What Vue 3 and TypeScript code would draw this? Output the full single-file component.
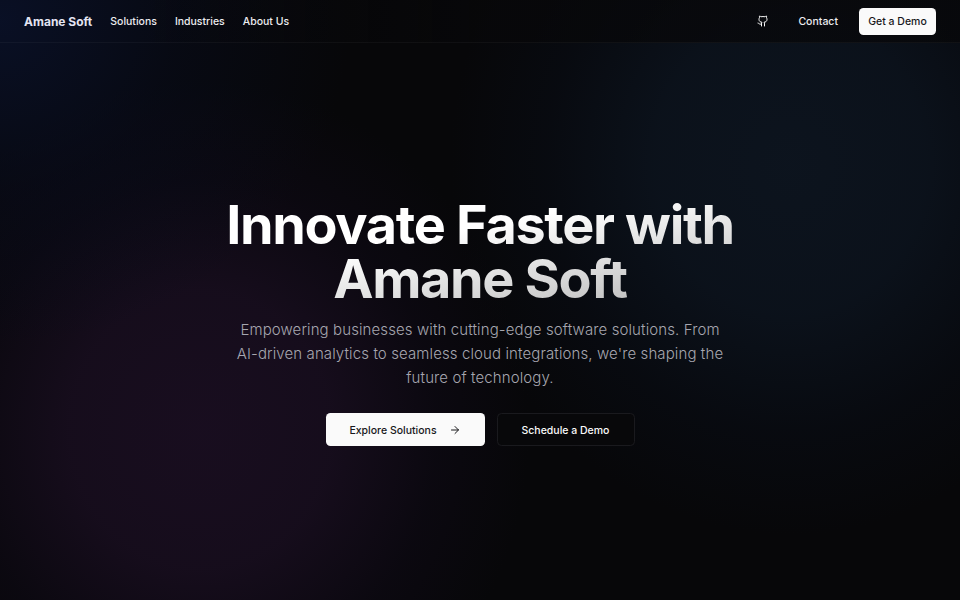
<script setup lang="ts">
interface NavLink {
  label: string
  href: string
}

const links: NavLink[] = [
  { label: 'Solutions', href: '#solutions' },
  { label: 'Industries', href: '#industries' },
  { label: 'About Us', href: '#about' },
]
</script>

<template>
  <div class="page">
    <header class="header">
      <nav class="nav">
        <a class="brand" href="#">Amane Soft</a>
        <a v-for="link in links" :key="link.href" class="link" :href="link.href">{{ link.label }}</a>
      </nav>
      <div class="actions">
        <a class="github" href="#github">
          <svg viewBox="0 0 24 24" class="icon">
            <path d="M15 22v-4a4.8 4.8 0 0 0-1-3.5c3 0 6-2 6-5.5.08-1.25-.27-2.48-1-3.5.28-1.15.28-2.35 0-3.5 0 0-1 0-3 1.5-2.64-.5-5.36-.5-8 0C6 2 5 2 5 2c-.3 1.15-.3 2.35 0 3.5A5.403 5.403 0 0 0 4 9c0 3.500 3 5.500 6 5.500-.39.49-.68 1.050-.85 1.650-.17.6-.22 1.230-.15 1.850v4" />
            <path d="M9 18c-4.510 2-5-2-7-2" />
          </svg>
        </a>
        <a class="contact" href="#contact">Contact</a>
        <button class="button small" type="button">Get a Demo</button>
      </div>
    </header>
    <main class="hero">
      <h1 class="title">Innovate Faster with<br />Amane Soft</h1>
      <p class="lead">
        Empowering businesses with cutting-edge software solutions. From AI-driven analytics to
        seamless cloud integrations, we're shaping the future of technology.
      </p>
      <div class="buttons">
        <button class="button large" type="button">
          Explore Solutions
          <svg viewBox="0 0 24 24" class="icon arrow">
            <path d="M5 12h14" />
            <path d="m12 5 7 7-7 7" />
          </svg>
        </button>
        <button class="button large outline" type="button">Schedule a Demo</button>
      </div>
    </main>
  </div>
</template>

<style>
body {
  background: #08080a;
}
</style>

<style scoped>
.page {
  display: flex;
  flex-direction: column;
  height: 600px;
  overflow: hidden;
  font-family: Inter, sans-serif;
  color: #fafafa;
  background:
    radial-gradient(ellipse 350px 330px at 0 20px, rgba(10, 18, 44, 0.8), rgba(8, 13, 32, 0.45) 50%, transparent),
    radial-gradient(ellipse 330px 350px at 200px 430px, rgba(26, 14, 33, 0.92) 0%, rgba(25, 14, 32, 0.82) 40%, rgba(16, 10, 24, 0.45) 72%, transparent 100%),
    radial-gradient(ellipse 340px 370px at 790px 165px, rgba(13, 21, 32, 0.9) 0%, rgba(12, 20, 31, 0.8) 40%, rgba(9, 14, 24, 0.45) 72%, transparent 100%),
    #070709;
}

.header {
  display: flex;
  flex: none;
  align-items: center;
  justify-content: space-between;
  box-sizing: border-box;
  height: 42.500px;
  padding: 0.500px 24px 0;
  border-bottom: 1px solid rgba(255, 255, 255, 0.04);
  background: linear-gradient(90deg, transparent 15%, rgba(7, 7, 9, 0.75) 50%);
}

.nav {
  display: flex;
  align-items: center;
  gap: 18px;
  padding-top: 1px;
}

a {
  color: inherit;
  text-decoration: none;
}

.brand {
  font-size: 12px;
  font-weight: 700;
  color: #e4e4f2;
}

.link,
.contact {
  font-size: 10.500px;
  font-weight: 500;
  color: #ececf0;
}

.actions {
  display: flex;
  align-items: center;
}

.github {
  display: flex;
  margin-right: 29.500px;
}

.contact {
  margin-right: 21px;
}

.icon {
  width: 12px;
  height: 12px;
  fill: none;
  stroke: currentColor;
  stroke-width: 2;
  stroke-linecap: round;
  stroke-linejoin: round;
}

.button {
  display: inline-flex;
  align-items: center;
  justify-content: center;
  box-sizing: border-box;
  border: 0;
  border-radius: 4.500px;
  padding: 0;
  background: #fafafa;
  color: #18181b;
  font: 500 10.500px Inter, sans-serif;
}

.small {
  width: 77px;
  height: 27px;
  padding-top: 0.500px;
}

.hero {
  display: flex;
  flex: 1;
  flex-direction: column;
  align-items: center;
  padding-top: 155px;
}

.title {
  width: 576px;
  margin: 0;
  font-size: 54px;
  font-weight: 700;
  line-height: 54px;
  letter-spacing: -1.350px;
  text-align: center;
  color: transparent;
  background: linear-gradient(to bottom right, #fff 38%, #b0b0b0 100%);
  -webkit-background-clip: text;
  background-clip: text;
}

.lead {
  width: 496px;
  margin: 12.500px 0 0;
  font-size: 15px;
  font-weight: 300;
  line-height: 24px;
  letter-spacing: 0.110px;
  text-align: center;
  color: #a6a6af;
}

.buttons {
  display: flex;
  gap: 12px;
  margin-top: 23px;
}

.large {
  width: 159px;
  height: 33px;
  padding-top: 1px;
}

.arrow {
  margin-left: 12px;
}

.outline {
  width: 138px;
  border: 1px solid #1a1a1e;
  background: #08080a;
  color: #fafafa;
}
</style>
